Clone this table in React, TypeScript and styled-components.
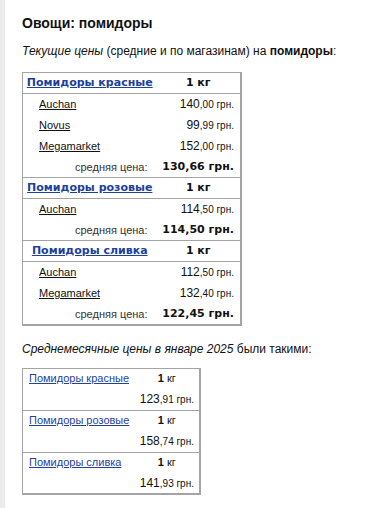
import React from 'react';
import styled, { createGlobalStyle } from 'styled-components';

interface Shop {
  name: string;
  whole: string;
  cents: string;
}

interface Group {
  title: string;
  shops: Shop[];
  avg: string;
}

interface MonthItem {
  title: string;
  whole: string;
  cents: string;
}

const groups: Group[] = [
  {
    title: 'Помидоры красные',
    shops: [
      { name: 'Auchan', whole: '140', cents: ',00 грн.' },
      { name: 'Novus', whole: '99', cents: ',99 грн.' },
      { name: 'Megamarket', whole: '152', cents: ',00 грн.' },
    ],
    avg: '130,66 грн.',
  },
  {
    title: 'Помидоры розовые',
    shops: [{ name: 'Auchan', whole: '114', cents: ',50 грн.' }],
    avg: '114,50 грн.',
  },
  {
    title: 'Помидоры сливка',
    shops: [
      { name: 'Auchan', whole: '112', cents: ',50 грн.' },
      { name: 'Megamarket', whole: '132', cents: ',40 грн.' },
    ],
    avg: '122,45 грн.',
  },
];

const month: MonthItem[] = [
  { title: 'Помидоры красные', whole: '123', cents: ',91 грн.' },
  { title: 'Помидоры розовые', whole: '158', cents: ',74 грн.' },
  { title: 'Помидоры сливка', whole: '141', cents: ',93 грн.' },
];

const GlobalStyle = createGlobalStyle`
  html, body {
    margin: 0;
    padding: 0;
    background: #fff;
  }
  body {
    font-family: "Liberation Sans", Arial, sans-serif;
    color: #111;
  }
`;

const Page = styled.div`
  min-height: 508px;
  border-left: 5px solid #ebebf0;
  padding: 14px 0 0 17px;
  box-sizing: border-box;
`;

const Title = styled.h2`
  margin: 0;
  font-size: 14px;
  line-height: 18px;
  font-weight: bold;
  color: #111;
`;

const Intro = styled.p<{ $top: number; $bottom: number }>`
  margin: ${(p) => p.$top}px 0 ${(p) => p.$bottom}px;
  font-size: 12px;
  line-height: 16px;
  color: #111;

  em {
    font-style: italic;
  }
  b {
    font-weight: bold;
  }
`;

const PriceTable = styled.table<{ $width: number }>`
  width: ${(p) => p.$width}px;
  table-layout: fixed;
  border-collapse: collapse;
  border-top: 1px solid #a4a4a4;
  border-left: 1px solid #a4a4a4;
  border-right: 2px solid #a4a4a4;
  border-bottom: 2px solid #a4a4a4;
`;

const Section = styled.tbody<{ $last?: boolean }>`
  border-bottom: ${(p) => (p.$last ? 'none' : '1px solid #a4a4a4')};
`;

const HeadRow = styled.tr`
  height: 21px;
  border-bottom: 1px solid #a4a4a4;
`;

const HeadCell = styled.td`
  padding: 0;
  text-align: center;
  font-family: "DejaVu Sans", Verdana, sans-serif;
  font-size: 11px;
  font-weight: bold;
  line-height: 14px;
  color: #111;
  vertical-align: middle;
`;

const HeadLink = styled.a`
  color: #1d3f9e;
  text-decoration: underline;
`;

const DataRow = styled.tr`
  height: 21px;
`;

const ShopCell = styled.td`
  padding: 0 0 0 16px;
  font-size: 11px;
  line-height: 14px;
  vertical-align: middle;
`;

const ShopLink = styled.a`
  color: #111;
  text-decoration: underline;
`;

const PriceCell = styled.td<{ $pad: number }>`
  padding: 0 ${(p) => p.$pad}px 0 0;
  text-align: right;
  font-size: 12px;
  line-height: 14px;
  color: #111;
  vertical-align: middle;
  white-space: nowrap;
`;

const Cents = styled.span`
  font-size: 10px;
`;

const AvgLabel = styled.td`
  padding: 0 9px 0 0;
  text-align: right;
  font-size: 11px;
  line-height: 14px;
  color: #333;
  vertical-align: middle;
`;

const AvgValue = styled.td`
  padding: 0 6px 0 0;
  text-align: right;
  font-family: "DejaVu Sans", Verdana, sans-serif;
  font-size: 11px;
  font-weight: bold;
  color: #111;
  vertical-align: middle;
  white-space: nowrap;
`;

const MonthRow = styled.tr`
  height: 21px;
`;

const MonthName = styled.td`
  padding: 0 0 2px 6px;
  font-size: 11px;
  line-height: 14px;
  vertical-align: middle;
  white-space: nowrap;
`;

const MonthLink = styled.a`
  color: #1f42a0;
  text-decoration: underline;
`;

const MonthUnit = styled.td`
  padding: 0 0 2px;
  text-align: center;
  font-size: 11px;
  line-height: 14px;
  color: #111;
  vertical-align: middle;
`;

const Bold = styled.span`
  font-weight: bold;
`;

const App = () => {
  return (
    <>
      <GlobalStyle />
      <Page>
        <Title>Овощи: помидоры</Title>
        <Intro $top={11} $bottom={13}>
          <em>Текущие цены</em> (средние и по магазинам) на <b>помидоры</b>:
        </Intro>

        <PriceTable $width={220}>
          <colgroup>
            <col style={{ width: 134 }} />
            <col />
          </colgroup>
          {groups.map((g, i) => (
            <Section key={g.title} $last={i === groups.length - 1}>
              <HeadRow>
                <HeadCell>
                  <HeadLink href="#">{g.title}</HeadLink>
                </HeadCell>
                <HeadCell>1 кг</HeadCell>
              </HeadRow>
              {g.shops.map((s) => (
                <DataRow key={s.name}>
                  <ShopCell>
                    <ShopLink href="#">{s.name}</ShopLink>
                  </ShopCell>
                  <PriceCell $pad={6}>
                    {s.whole}
                    <Cents>{s.cents}</Cents>
                  </PriceCell>
                </DataRow>
              ))}
              <DataRow>
                <AvgLabel>средняя цена:</AvgLabel>
                <AvgValue>{g.avg}</AvgValue>
              </DataRow>
            </Section>
          ))}
        </PriceTable>

        <Intro $top={15} $bottom={11}>
          <em>Среднемесячные цены в январе 2025</em> были такими:
        </Intro>

        <PriceTable $width={179}>
          <colgroup>
            <col style={{ width: 112 }} />
            <col />
          </colgroup>
          {month.map((m, i) => (
            <Section key={m.title} $last={i === month.length - 1}>
              <MonthRow>
                <MonthName>
                  <MonthLink href="#">{m.title}</MonthLink>
                </MonthName>
                <MonthUnit>
                  <Bold>1</Bold> кг
                </MonthUnit>
              </MonthRow>
              <MonthRow>
                <PriceCell $pad={5} colSpan={2}>
                  {m.whole}
                  <Cents>{m.cents}</Cents>
                </PriceCell>
              </MonthRow>
            </Section>
          ))}
        </PriceTable>
      </Page>
    </>
  );
};

export default App;
